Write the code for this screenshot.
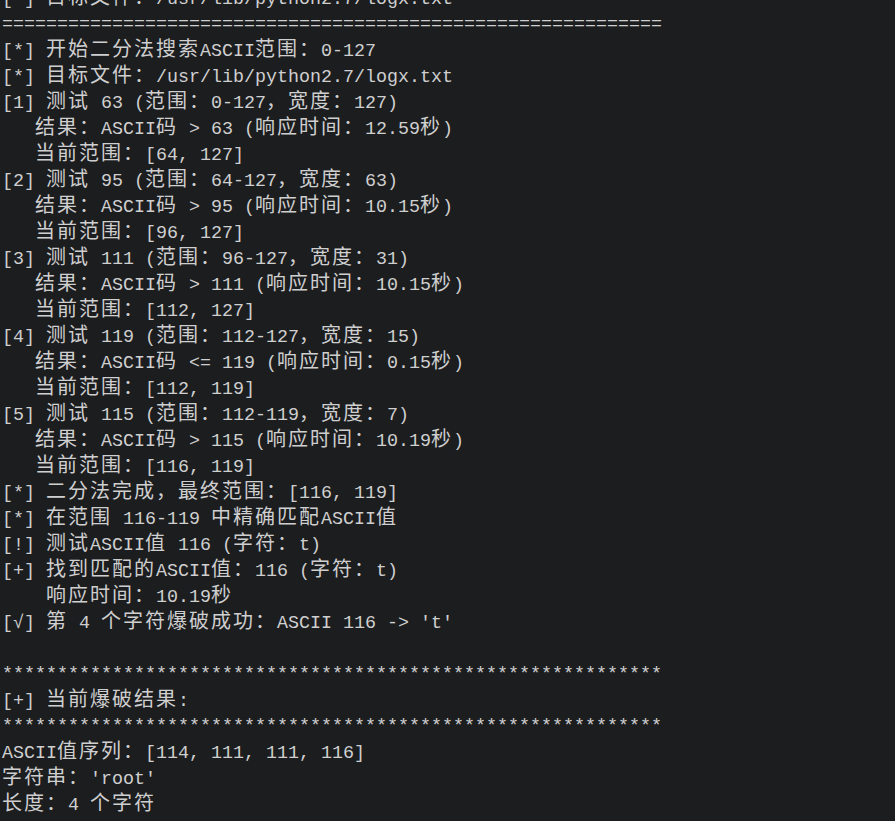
const lines = [
  "[*] 目标文件: /usr/lib/python2.7/logx.txt",
  "============================================================",
  "[*] 开始二分法搜索ASCII范围: 0-127",
  "[*] 目标文件: /usr/lib/python2.7/logx.txt",
  "[1] 测试 63 (范围: 0-127, 宽度: 127)",
  "   结果: ASCII码 > 63 (响应时间: 12.59秒)",
  "   当前范围: [64, 127]",
  "[2] 测试 95 (范围: 64-127, 宽度: 63)",
  "   结果: ASCII码 > 95 (响应时间: 10.15秒)",
  "   当前范围: [96, 127]",
  "[3] 测试 111 (范围: 96-127, 宽度: 31)",
  "   结果: ASCII码 > 111 (响应时间: 10.15秒)",
  "   当前范围: [112, 127]",
  "[4] 测试 119 (范围: 112-127, 宽度: 15)",
  "   结果: ASCII码 <= 119 (响应时间: 0.15秒)",
  "   当前范围: [112, 119]",
  "[5] 测试 115 (范围: 112-119, 宽度: 7)",
  "   结果: ASCII码 > 115 (响应时间: 10.19秒)",
  "   当前范围: [116, 119]",
  "[*] 二分法完成，最终范围: [116, 119]",
  "[*] 在范围 116-119 中精确匹配ASCII值",
  "[!] 测试ASCII值 116 (字符: t)",
  "[+] 找到匹配的ASCII值: 116 (字符: t)",
  "    响应时间: 10.19秒",
  "[√] 第 4 个字符爆破成功: ASCII 116 -> 't'",
  "",
  "************************************************************",
  "[+] 当前爆破结果:",
  "************************************************************",
  "ASCII值序列: [114, 111, 111, 116]",
  "字符串: 'root'",
  "长度: 4 个字符",
];

// the terminal draws a colon after CJK text as a full-width one (two cells)
const fix = (s: string) => s.replace(/([\u4e00-\u9fff]): /g, "$1：").replace(/, (?=宽度)/g, "，");

const render = (s: string) =>
  fix(s)
    .split(/([\u3000-\u303f\u4e00-\u9fff\uff00-\uffef]+)/)
    .map((p, i) =>
      i % 2 ? (
        <span
          key={i}
          className="text-[20px] tracking-[2px] leading-[26px]"
          style={{ fontFamily: '"Noto Sans CJK SC", sans-serif' }}
        >
          {p}
        </span>
      ) : (
        p
      )
    );

export default function App() {
  return (
    <div className="w-[895px] h-[821px] overflow-hidden bg-[#1c1d1f] text-[#cfcfcf]">
      <div
        className="-mt-[17px] pl-[2px] text-[18.33px] leading-[26px] whitespace-pre"
        style={{ fontFamily: '"Liberation Mono", "DejaVu Sans Mono", "Noto Sans CJK SC", monospace' }}
      >
        {lines.map((l, i) => (
          <div key={i} className={/^[=*]+$/.test(l) ? "h-[26px] pt-[3px]" : "h-[26px]"}>
            {render(l)}
          </div>
        ))}
      </div>
    </div>
  );
}
